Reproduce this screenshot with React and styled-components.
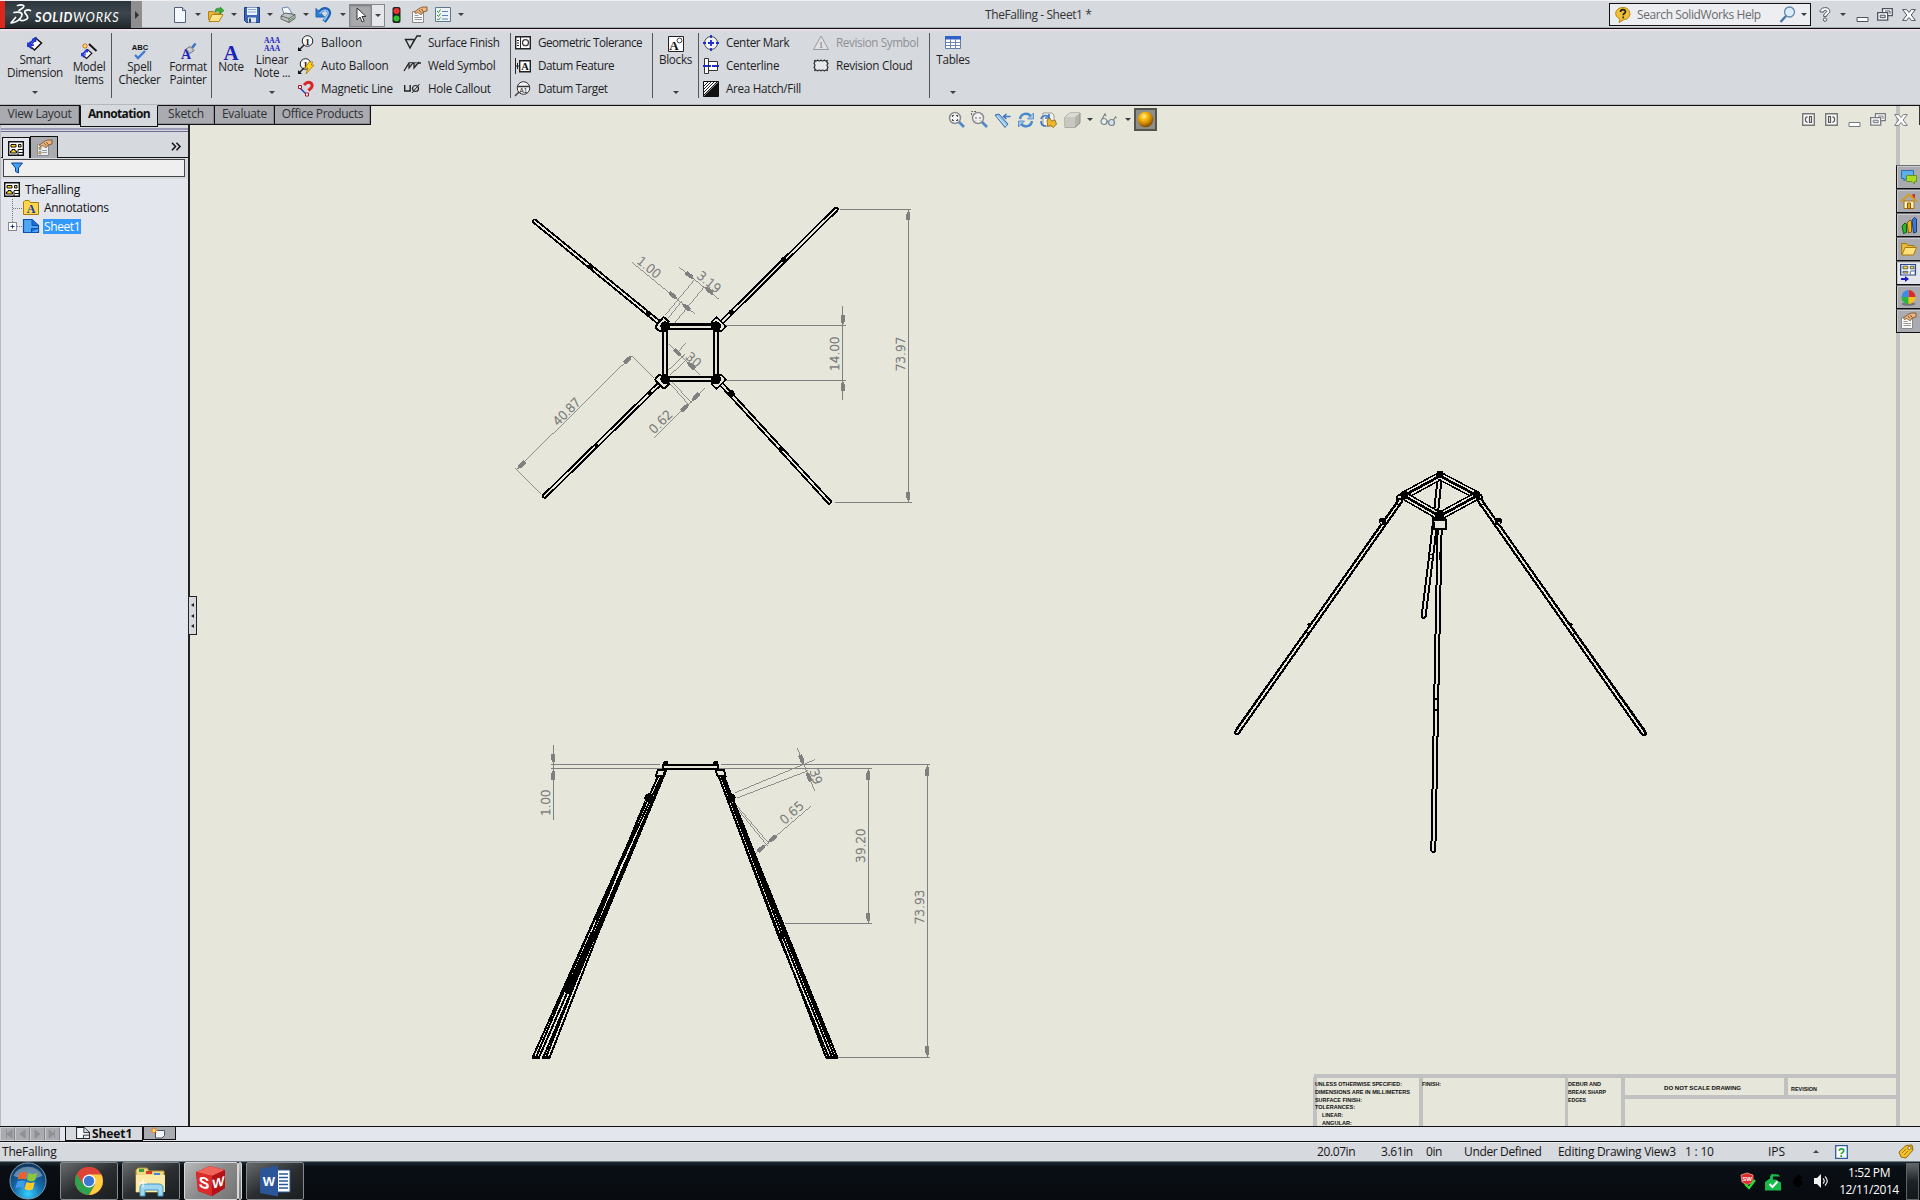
import React from 'react';
import styled, { createGlobalStyle } from 'styled-components';

const BAR = '#d6d9de';
const PAPER = '#e6e6da';
const UI = '"Open Sans", "Noto Sans", sans-serif';

const Global = createGlobalStyle`
  body { margin: 0; background: ${BAR}; overflow: hidden; }
  * { box-sizing: border-box; }
  svg { display: block; flex: none; overflow: visible; }
`;

const Shell = styled.div`
  width: 1920px; height: 1200px; display: flex; flex-direction: column;
  font-family: ${UI}; font-size: 12px; line-height: 13px; color: #1e1e1e; cursor: default;
`;
const Text = styled.span`
  white-space: pre; letter-spacing: ${p => p.$ls || 0}px; font-weight: ${p => p.$bold ? 700 : 400};
  color: ${p => p.$color || 'inherit'}; font-size: ${p => p.$size || 12}px;
`;

/* ---------- title bar ---------- */
const TitleBar = styled.header`
  height: 29px; flex: none; display: flex; align-items: stretch; background: ${BAR};
  border-top: 1px solid #efeff1; border-bottom: 1px solid #111; box-shadow: inset 0 -1px #a9abb0;
  > * { flex: none; }
`;
const Brand = styled.div`
  width: 131px; display: flex; align-items: center; border-left: 5px solid #da291c;
  background: linear-gradient(#2b353b, #3c474d 45%, #20282c); color: #fff;
`;
const BrandName = styled.div`
  font: italic 700 12.5px Lato, sans-serif; letter-spacing: .75px; margin-left: -2px; padding-top: 6px;
  span { font-weight: 400; }
`;
const BrandMore = styled.div`
  width: 11px; background: #8e8e8e; display: flex; align-items: center; justify-content: center; margin-right: 25px;
`;
const Right = styled.i`border: 4px solid transparent; border-left-color: #333; border-right: 0;`;
const Cell = styled.div`
  width: ${p => p.$w}px; flex: none; display: flex; align-items: center; justify-content: ${p => p.$start ? 'flex-start' : 'center'};
  padding-left: ${p => p.$pl || 0}px;
`;
const Caret = styled.i`
  display: block; width: 0; height: 0; border: 3px solid transparent; border-top: 3px solid #3a3d42; border-bottom: 0;
  ${p => p.$up && 'border-top: 0; border-bottom: 3px solid #444;'}
`;
const Pick = styled.div`
  width: 36px; height: 23px; margin: 3px 0 0 0; display: flex; border: 1px solid #85878b; background: #e4e6ea;
  > :first-child { width: 22px; background: #a7a9ad; box-shadow: inset 0 1px 2px #77797d; border-right: 1px solid #85878b; }
`;
const DocTitle = styled.div`display: flex; align-items: center; margin-left: 517px; width: 624px; color: #333;`;
const Search = styled.div`
  width: 202px; height: 23px; margin: 2px 7px 0 0; border: 1px solid #111; background: #eceef2; display: flex; align-items: center;
  padding-left: 5px; color: #6a6a6a;
`;

/* ---------- ribbon ---------- */
const Ribbon = styled.div`
  height: 77px; flex: none; display: flex; background: ${BAR};
  border-top: 2px solid #eadfe8; border-bottom: 1px solid #111; box-shadow: inset 0 -1px #b5b7bb;
`;
const Sep = styled.div`width: 1px; height: 65px; margin: 2px 0 0 ${p => p.$l || 0}px; background: #55575b; flex: none;`;
const Big = styled.div`
  width: ${p => p.$w}px; flex: none; display: flex; flex-direction: column; align-items: center; padding-top: ${p => p.$low ? 12 : 5}px; text-align: center;
`;
const BigLabel = styled.div`display: flex; flex-direction: column; align-items: center; margin-top: ${p => p.$top || 0}px;`;
const DropAt = styled.div`margin-top: ${p => p.$top}px;`;
const Col = styled.div`width: ${p => p.$w}px; margin-left: ${p => p.$l || 0}px; flex: none; display: grid; grid-template-rows: repeat(3, 23px);`;
const Cmd = styled.div`display: flex; align-items: center; color: ${p => p.$off ? '#8e9094' : 'inherit'};`;
const CmdIcon = styled.div`width: ${p => p.$w || 23}px; flex: none;`;

/* ---------- command tabs ---------- */
const Work = styled.div`position: relative; height: 1020px; flex: none; display: flex;`;
const Tabs = styled.nav`position: absolute; left: 0; top: -1px; display: flex; align-items: flex-start; z-index: 2;`;
const Tab = styled.div`
  width: ${p => p.$w}px; height: ${p => p.$on ? 22 : 20}px; display: flex; align-items: center; justify-content: center;
  background: ${p => p.$on ? BAR : '#a9abb0'}; border: 1px solid #111; border-left: ${p => p.$on ? '1px solid #111' : '0'};
  border-top-color: ${p => p.$on ? BAR : '#111'}; color: ${p => p.$on ? '#111' : '#2f3033'};
  padding-bottom: ${p => p.$on ? 5 : 3}px; box-shadow: ${p => p.$on ? 'none' : 'inset -1px -1px #8b8d92'};
`;

/* ---------- feature panel ---------- */
const Panel = styled.aside`
  width: 190px; flex: none; background: #e3e6ec; border-right: 2px solid #222; border-left: 1px solid #b9bbc0; display: flex; flex-direction: column;
`;
const PanelTop = styled.div`height: 52px; padding-top: 22px; background: ${BAR}; border-bottom: 1px solid #111;`;
const Stripe = styled.div`height: 4px; border-top: 2px solid #9c9ab6; border-bottom: 1px solid #6b6a90;`;
const PanelTabs = styled.div`display: flex; align-items: flex-end; height: 26px; padding: 0 6px 0 1px;`;
const PanelTab = styled.div`
  width: 28px; height: 22px; border: 1px solid #111; border-bottom: 0; background: ${p => p.$on ? '#e3e6ec' : '#a9abb0'};
  display: flex; align-items: center; justify-content: center; margin-bottom: ${p => p.$on ? -1 : 0}px;
`;
const More = styled.div`margin-left: auto; align-self: center; padding-top: 3px; margin-right: 1px;`;
const FilterWrap = styled.div`background: ${BAR}; padding: 1px 3px 2px 2px; height: 21px;`;
const Filter = styled.div`height: 18px; border: 1px solid #444; background: #efefef; display: flex; align-items: center; padding-left: 7px;`;
const Tree = styled.div`padding-top: 2px; display: flex; flex-direction: column; color: #111;`;
const Node = styled.div`height: 18px; display: flex; align-items: center; padding-left: ${p => p.$l}px; gap: ${p => p.$gap ?? 5}px; span { padding-bottom: 1px; }`;
const Sel = styled.div`background: #3399ff; color: #fff; padding: 1px 1px 0; height: 15px; display: flex; align-items: center;`;
const Handle = styled.div`
  position: absolute; left: 188px; top: 490px; width: 9px; height: 39px; border: 1px solid #222; background: #d6d9de; z-index: 3;
  display: flex; flex-direction: column; justify-content: space-evenly; align-items: center;
`;
const Left = styled.i`border: 2.5px solid transparent; border-right: 3px solid #222; border-left: 0;`;

/* ---------- canvas ---------- */
const Canvas = styled.main`position: relative; width: 1730px; height: 1020px; background: ${PAPER}; overflow: hidden;`;
const HeadsUp = styled.div`position: absolute; left: 755px; top: 2px; height: 23px; display: flex; align-items: center;`;
const Scene = styled.div`width: 23px; height: 23px; background: #8f8f8a; border: 2px solid #55554f; display: flex; align-items: center; justify-content: center;`;
const DocControls = styled.div`position: absolute; left: 1607px; top: 2px; height: 23px; display: flex; align-items: center;`;
const TaskTabs = styled.div`position: absolute; right: 0; top: 59px; width: 24px; display: flex; flex-direction: column;`;
const TaskTab = styled.div`
  height: 24px; border: 1px solid #111; border-right: 0; border-top-color: #6d6f73; background: ${p => p.$on ? '#e3e6ec' : '#a9abb0'}; box-shadow: inset 1px 1px #c9cbcf;
  display: flex; align-items: center; justify-content: center;
`;

/* ---------- bottom ---------- */
const SheetBar = styled.div`height: 16px; flex: none; display: flex; background: #e3e6ec; border-top: 1px solid #111; border-bottom: 1px solid #111;`;
const Nav = styled.div`
  width: 15px; height: 14px; border: 1px solid #c9cbcf; border-right-color: #84868a; background: #a9abb0; display: flex; align-items: center; justify-content: center;
`;
const SheetTab = styled.div`
  width: ${p => p.$w}px; height: ${p => p.$on ? 14 : 13}px; display: flex; align-items: center; gap: 2px; padding-left: ${p => p.$on ? 10 : 6}px; color: #111;
  background: ${p => p.$on ? BAR : '#a9abb0'}; border: 1px solid #111; border-top: 0; margin-left: ${p => p.$l || 0}px; line-height: 11px; padding-bottom: 1px;
`;
const Status = styled.footer`height: 19px; flex: none; display: flex; align-items: center; background: ${BAR}; color: #161616; padding: 0 0 1px 2px; border-top: 1px solid #ecedf0;`;
const Stat = styled.div`width: ${p => p.$w}px; flex: none; display: flex; align-items: center;`;
const TaskBar = styled.div`
  height: 39px; flex: none; display: flex; background: linear-gradient(#1b2a33, #0a0f15 12%, #070b10); border-top: 1px solid #6f7c85; color: #fff;
`;
const Orb = styled.div`width: 60px; display: flex; justify-content: center; padding-right: 5px;`;
const TaskBtn = styled.div`
  width: ${p => p.$w || 58}px; height: 38px; margin-right: ${p => p.$gap ?? 4}px; border: 1px solid ${p => p.$on ? '#d8d8d8' : '#85898c'}; border-radius: 2px;
  background: ${p => p.$on ? 'linear-gradient(135deg,#b9b9b9,#8a8a8a 50%,#757575)' : 'linear-gradient(150deg,#686a6c,#2c2f31 50%,#1a1d1f)'};
  display: flex; align-items: center; justify-content: center;
`;
const Tray = styled.div`margin-left: auto; display: flex; align-items: center;`;
const Clock = styled.div`width: 74px; text-align: center; line-height: 17px; display: flex; flex-direction: column;`;
const Desk = styled.div`width: 13px; height: 37px; border: 1px solid #5d6468; background: linear-gradient(#60666a, #1c2225 50%, #14181b); margin-right: 1px;`;

/* ---------- icons ---------- */
const Ico = ({ w = 16, h = 16, vb, children }) => (
  <svg width={w} height={h} viewBox={vb || `0 0 ${w} ${h}`} fill="none" stroke="none">{children}</svg>
);
const DS = () => (
  <Ico w={22} h={21} vb="0 0 22 21"><g stroke="#fff" strokeWidth="1.700" strokeLinecap="round" strokeLinejoin="round">
    <path d="M7.500 1.500c5-1.200 8-.3 5.500 2.200L9 6.500" />
    <path d="M4 8.500c7-1.500 10 1 6.500 5.500C8 17 5 18.800 1 19l4.500-5.500" />
    <path d="M20.500 6.500c-3.500-1.500-7.500.5-5 3.200s3.500 5-.5 6.300-4 .4-5 0" /></g></Ico>
);
const NewI = () => <Ico><path d="M2.500 .5h8l3 3v12h-11z" fill="#f2f8fd" stroke="#51627a" /><path d="M10.500 .5v3h3" fill="#cfe0f0" stroke="#51627a" /></Ico>;
const OpenI = () => <Ico><path d="M.5 13V4.500h5l1 1.500h6v2" fill="#e9b93a" stroke="#b1821b" /><path d="M1 14.500l3-7h11l-4 7z" fill="#ffe58a" stroke="#b1821b" /><path d="M7 5c0-4 3-4.500 5-3V0l4 3.500-4 3.500V5c-2-1.500-3-1-5 0z" fill="#35b035" stroke="#1e7a1e" strokeWidth=".6" /></Ico>;
const SaveI = () => <Ico><path d="M.5 .5h15v15h-13l-2-2z" fill="#3a66b5" stroke="#1b3c80" /><path d="M3 .5h10v7.500H3z" fill="#eef3fa" /><path d="M4 2.500h8M4 5h8" stroke="#8aa6cc" /><path d="M4 10.500h8v5H4z" fill="#dfe6ee" /><path d="M5 11.500h2v4H5z" fill="#24427c" /></Ico>;
const PrintI = () => <Ico><path d="M4 7L2 1l6-1 4 6.500z" fill="#f4f8fb" stroke="#6c8cb0" /><path d="M1 9l4-3 10 1.500v4l-6 4-8-3.500z" fill="#c0c3c6" stroke="#666" /><path d="M1 9l8 2.500 6-4M9 11.500v4" stroke="#666" /><path d="M10 13l4-2.500" stroke="#3a3" /></Ico>;
const UndoI = () => <Ico><path d="M3 6C8-.5 14 2 13 7c-.5 3-3 5-5 7.500" stroke="#1e5fb4" strokeWidth="4" /><path d="M0 1.500V10h8.500z" fill="#2d7fd6" stroke="#1e5fb4" /><path d="M3.500 6.500C8 1 13 3 12 7c-.5 2-2 4-4 6.500" stroke="#8cc8fa" strokeWidth="1.500" /></Ico>;
const CursorI = () => <Ico w={12} h={17}><path d="M2 1v12l3-3 2.200 5 2-1L7 9.500h4z" fill="#fff" stroke="#333" /></Ico>;
const LightI = () => <Ico w={9} h={16}><rect x=".5" y="0" width="8" height="16" rx="2" fill="#222" /><circle cx="4.500" cy="4" r="3" fill="#e33" /><circle cx="4.500" cy="11.500" r="3" fill="#2fc42f" /></Ico>;
const HandI = ({ tint = '#fafafa', blocks }) => <Ico w={17}><path d="M1.500 4.500h11v11h-11z" fill={tint} stroke="#8a8a8a" /><path d="M6 10.500h5M6 12.500h5" stroke="#999" />{blocks ? <path d="M3 7h2v2.500H3zM3 11.500h2V14H3z" fill="#f0b41e" stroke="#666" strokeWidth=".5" /> : <path d="M3.500 8.500h4M3.500 10.500h3M3.500 12.500h3" stroke="#999" />}<path d="M3.500 5L8 1.500l3.500-1.500h4.500v4l-4 1-1.500 2.500-2-.5L7 5.500l-2.500 1z" fill="#e9b684" stroke="#7a4a1c" strokeWidth=".8" /><path d="M8 3l2 2.500M10.500 2l1.500 2.500" stroke="#7a4a1c" strokeWidth=".9" /></Ico>;
const ListI = () => <Ico><path d="M.5 .5h15v14H.5z" fill="#eef2f7" stroke="#5f7690" /><path d="M7 4.500h6M7 8.500h6M7 12h6" stroke="#5c84b4" /><path d="M2 4l1.500 1.500L5.500 2.500M2 8l1.500 1.500L5.500 6.500M2 12l1.500 1L5.500 10.500" stroke="#2a9a2a" /></Ico>;
const Bubble = () => <Ico><path d="M8 .5c9 0 9 12 1 12L4 15.500l1-3.500C-2 9 0 .5 8 .5z" fill="#f3c136" stroke="#b58518" /><path d="M5.500 5c0-3 5-3 5-.3 0 1.600-2.300 1.600-2.300 3.600M8.200 9.500v1.700" stroke="#222" strokeWidth="1.700" /></Ico>;
const Lens = () => <Ico w={17} h={17}><circle cx="10.500" cy="6" r="5" fill="#dcecfa" stroke="#5f88ad" strokeWidth="1.300" /><path d="M7 10L1.500 16" stroke="#4a78a6" strokeWidth="2.400" /></Ico>;
const QMark = () => <Ico w={12} h={15}><path d="M1 4.800C1-.6 11-.8 10.800 4.400c-.1 2.400-3 2.500-3.300 5H4.600c0-4 3.200-3.500 3.200-5 0-1.500-3.400-1.500-3.400.8z" fill="#fff" stroke="#4d5360" /><circle cx="6" cy="12.600" r="1.700" fill="#fff" stroke="#4d5360" /></Ico>;
const MinI = ({ c = '#4d5360' }) => <Ico w={13} h={14}><path d="M1 9.500h11v4H1z" fill="#fff" stroke={c} /></Ico>;
const RestI = ({ c = '#4d5360' }) => <Ico w={16} h={13}><path d="M5.500 .7h9.800v7H5.500z" fill="#fff" stroke={c} strokeWidth="1.300" /><path d="M8 3h5v3" stroke={c} /><path d="M.7 4.700h10v7.500h-10z" fill="#fff" stroke={c} strokeWidth="1.300" /><path d="M3.200 7.200h5v2.500h-5z" fill={BAR} stroke={c} /></Ico>;
const XI = ({ c = '#4d5360' }) => <Ico w={14} h={12}><path d="M.6.600h4L7 3.500 9.400.6h4L9.200 6l4.200 5.400h-4L7 8.500l-2.400 2.900h-4L4.800 6z" fill="#fff" stroke={c} /></Ico>;

const Dim = () => <g><path d="M2 8l6-6 6 5-7 7z" fill="#fff" /><path d="M8 1.500L14.500 7 7.500 14 4 11" stroke="#111" strokeWidth="1.500" /><path d="M2 8.500L8 2M1 6.500v4.500M.5 9l4.500 3.500" stroke="#1c2ed0" strokeWidth="1.800" /><path d="M5 3.500l4-1.500L8.500 6M3 5.500V9.800l4-.8M4 9l5-6" stroke="#1c2ed0" strokeWidth="1.300" /></g>;
const SmartI = () => <Ico><Dim /></Ico>;
const ModelI = () => <Ico h={17}><g transform="translate(0 5) scale(.75)"><Dim /></g><path d="M8 1l7.500 7" stroke="#111" strokeWidth="1.800" /><path d="M4 0v6M1 3h6M2 1l4 4M6 1L2 5" stroke="#e66a1c" /><circle cx="4" cy="3" r="1.300" fill="#ffd94a" /></Ico>;
const Glyph = ({ x, y, s, f = '#111', b = 700, a = 'middle', serif, children }) => <text x={x} y={y} fontSize={s} fontWeight={b} fill={f} textAnchor={a} fontFamily={serif ? 'Liberation Serif, serif' : 'Liberation Sans, sans-serif'}>{children}</text>;
const SpellI = () => <Ico w={18} h={17}><Glyph x={9} y={6.5} s={7.600}>ABC</Glyph><path d="M4 12l3 3 7-7" stroke="#3f7ad6" strokeWidth="2.400" /></Ico>;
const FormatI = () => <Ico h={17}><Glyph x={6} y={16} s={14} f="#1a22b8" serif>A</Glyph><path d="M6 6l4-2.500 4 4-4.500 3z" fill="#c9ced6" stroke="#555" strokeWidth=".8" /><path d="M12 5l3.500-4.500" stroke="#3b74c4" strokeWidth="2.500" /></Ico>;
const NoteI = () => <Ico h={17}><Glyph x={8} y={16.500} s={21} f="#1a22b8" serif>A</Glyph></Ico>;
const LinearI = () => <Ico><Glyph x={8} y={7} s={7.500} f="#1a22b8" serif>AAA</Glyph><Glyph x={8} y={15} s={7.500} f="#1a22b8" serif>AAA</Glyph></Ico>;
const Balloon = ({ cx = 9.500 }) => <><circle cx={cx} cy="6" r="5.300" fill="#f6f6f6" stroke="#222" /><Glyph x={cx} y={9.500} s={9} serif>1</Glyph><path d="M6 10L1.500 14.500" stroke="#222" strokeWidth="1.500" /><path d="M0 16v-4l4 4z" fill="#111" /></>;
const BalloonI = () => <Ico><Balloon /></Ico>;
const AutoI = () => <Ico><Balloon cx={7.500} /><path d="M11 4l4 0-2 3h3l-8 9 2-6H7z" fill="#ffd21e" stroke="#a87800" strokeWidth=".8" /></Ico>;
const MagnetI = () => <Ico><path d="M6 4c5-5.500 10-1 7.500 2.500L9.500 10.500" stroke="#d8242b" strokeWidth="3" /><path d="M8 12l2.500-2.500" stroke="#ddd" strokeWidth="3" /><path d="M1 6l8 8" stroke="#1c2ed0" strokeWidth="1.300" /><path d="M.5 4.500h3v3h-3zM7.500 12h3v3h-3z" fill="#fff" stroke="#b01020" /></Ico>;
const SurfI = () => <Ico w={17}><path d="M1.500 4.500h9L6 13zM6 13L13 1h4" stroke="#222" strokeWidth="1.400" /></Ico>;
const WeldI = () => <Ico w={17} h={14}><path d="M0 12l5-8h12" stroke="#222" strokeWidth="1.300" /><path d="M5 4v5l4-5M10 4v5l5-6" stroke="#222" strokeWidth="1.200" fill="#aaa" /></Ico>;
const HoleI = () => <Ico w={17} h={12}><path d="M.7 2v6h5.500V2" stroke="#222" strokeWidth="1.400" /><circle cx="11.500" cy="5.500" r="3" stroke="#222" strokeWidth="1.200" /><path d="M8 10L15.500 1" stroke="#222" /></Ico>;
const GeoI = () => <Ico h={14}><path d="M.7.700h14.600v12H.7z" fill="#fff" stroke="#222" strokeWidth="1.400" /><path d="M5.500 1v12M2 4.500h2M2 7h2M2 9.500h2" stroke="#222" /><circle cx="10.500" cy="6.700" r="3" stroke="#444" strokeWidth="1.300" /></Ico>;
const DatI = () => <Ico><path d="M.5 0v16M1 8h4M2.500 5v6" stroke="#222" /><path d="M4.700 2.700h10.600v11H4.700z" fill="#fff" stroke="#222" strokeWidth="1.400" /><Glyph x={10} y={12} s={10.500} serif>A</Glyph></Ico>;
const TgtI = () => <Ico><circle cx="8.500" cy="7" r="6.300" fill="#f4f4f4" stroke="#333" /><path d="M2 5.500h13M4 11l-4 4" stroke="#333" strokeWidth="1.300" /><Glyph x={8.500} y={11.500} s={6.500} b={400}>A1</Glyph></Ico>;
const BlockI = () => <Ico><path d="M.5 .5h15v15H.5z" fill="#fff" stroke="#222" /><Glyph x={6} y={14} s={13} serif>A</Glyph><circle cx="11.500" cy="4.500" r="2.400" stroke="#444" fill="#fff" /></Ico>;
const CenI = () => <Ico><circle cx="8" cy="8" r="6.500" fill="#f2f3f6" stroke="#444" /><path d="M8 0v3M8 13v3M0 8h3M13 8h3M8 5v6M5 8h6" stroke="#1c2ed0" strokeWidth="1.800" /></Ico>;
const ClI = () => <Ico><path d="M1.500 .5h4v15h-4zM5.500 3.500h9v9h-9z" fill="#fff" stroke="#333" /><path d="M0 8h16" stroke="#1c2ed0" strokeWidth="2" strokeDasharray="5 1 2 1" /></Ico>;
const HatchI = () => <Ico><path d="M.5 .5h15v15H.5z" fill="#111" stroke="#111" /><path d="M1 1h14L1 15z" fill="#fff" /><path d="M1 5l4-4M1 8l7-7M1 11l10-10M1 14L14 1" stroke="#222" strokeWidth="1" /></Ico>;
const RevI = () => <Ico><path d="M8 1l7.500 13.500H.5z" fill="#e0e1e3" stroke="#9a9ca0" /><Glyph x={8} y={13} s={9} f="#9a9ca0" serif>1</Glyph></Ico>;
const CloudI = () => <Ico h={13}><path d="M1.500 1.500h13v10h-13z" fill="#e6e8eb" /><path d="M1.500 1q1.500 2 3.200 0q1.600 2 3.300 0q1.700 2 3.300 0q1.700 2 3.200 0q-1.500 1.900.5 3.600q-2 1.900 0 3.600q-1.500 1.900-.5 3.800q-1.500-2-3.200 0q-1.600-2-3.300 0q-1.700-2-3.300 0q-1.700-2-3.200 0q1.500-1.900-.5-3.800q2-1.700 0-3.600q1.500-1.700.5-3.600z" stroke="#222" strokeWidth="1.100" /></Ico>;
const TableI = () => <Ico h={13}><path d="M.5 .5h15v12H.5z" fill="#fff" stroke="#5f7aa8" /><path d="M0 0h16v3.500H0z" fill="#2f5fc8" /><path d="M5.500 3v10M10.500 3v10M1 6.500h15M1 9.500h15" stroke="#6f86ad" /></Ico>;

const DrawI = () => <Ico><path d="M.7.700h14.600v13.600H.7z" fill="#fff" stroke="#111" strokeWidth="1.400" /><path d="M3 3.500h5v2.500H3zM10.500 3.500h2.500v2.500h-2.500zM2.500 12v-2h1.500V8.500h3V10h1.500v2z" fill="#ffd21e" stroke="#111" /><path d="M10 8.500h5.500M10 8.500v6M10.500 11.500h5" stroke="#111" /></Ico>;
const FunnelI = () => <Ico w={12} h={12}><path d="M.5 1h11L7.500 6v5l-3-1.500V6z" fill="#43a4ee" stroke="#0f3f9a" /></Ico>;
const ChevI = () => <Ico w={10} h={9}><path d="M1 .8L4.500 4.500 1 8.200M5.500.8L9 4.500 5.500 8.200" stroke="#111" strokeWidth="1.500" /></Ico>;
const AnnI = () => <Ico><path d="M.5 14.500V2L2 .5h4l1.500 2h8v12z" fill="#ffd84a" stroke="#a97a10" /><Glyph x={8} y={13} s={12} f="#1238b8" serif>A</Glyph></Ico>;
const SheetI = ({ plain }) => <Ico w={plain ? 14 : 16} h={plain ? 12 : 14} vb="0 0 16 14"><path d="M.5 .5H9l6.500 6v7H.5z" fill={plain ? '#f6f9fc' : '#4fa6f5'} stroke={plain ? '#222' : '#0d4fae'} strokeWidth="1.200" /><path d="M9 .5v6h6M8.500 13V9.500h7" fill={plain ? '#cfe0f0' : '#1c6fdc'} stroke={plain ? '#222' : '#0d4fae'} /></Ico>;
const TreeLines = ({ plus }) => <Ico w={plus ? 14 : 11} h={18}>{plus
  ? <><path d="M4.500 0v5M9 9.500h6" stroke="#777" strokeDasharray="1 1" /><rect x=".5" y="5.500" width="8" height="8" fill="#fff" stroke="#888" /><path d="M2.500 9.500h4M4.500 7.500v4" stroke="#1b3c80" /></>
  : <path d="M.5 0v18M1 9.500h10" stroke="#777" strokeDasharray="1 1" />}</Ico>;

const ZoomI = ({ area }) => <Ico w={17} h={17}><circle cx="7" cy="7" r="5.500" fill="#f2f2f2" stroke="#8d8d8d" strokeWidth="1.500" />{area ? <path d="M.5 4V.5H5M5 6v3.500M9 6v3.500" stroke="#666" strokeDasharray="2 1" /> : <path d="M4.500 6V4.500H6M8 4.500h1.500V6M9.500 8v1.500H8M6 9.500H4.500V8" stroke="#555" strokeWidth="1.100" />}<path d="M11 11l5 5" stroke="#4f87c9" strokeWidth="2.600" /></Ico>;
const PrevI = () => <Ico w={17} h={16}><path d="M1 3l4-1 9 10-3 3.500z" fill="#8cc0ea" stroke="#3d6fa8" /><path d="M3 4l9 10" stroke="#e8f4ff" /><path d="M16.500 4.500h-6M12.500 2l-3 2.500 3 2.500" stroke="#3f77c4" strokeWidth="1.500" /></Ico>;
const RefreshI = () => <Ico><path d="M2 7C3 1 10 0 13 4.500M14 9c-1 6-8 7-11 2.500" stroke="#4788cf" strokeWidth="2.400" /><path d="M15.500 1v6h-6zM.5 15V9h6z" fill="#9cc8f2" stroke="#3d78bd" strokeWidth=".7" /></Ico>;
const ThreeDI = () => <Ico w={17}><path d="M3 1h9l2 2v11H3z" fill="#f5f5f5" stroke="#999" /><path d="M1 7c1-4 6-4 8-2M9 2v4H5M1 9c0 3 2 5 5 5" stroke="#3f77c4" strokeWidth="1.700" /><path d="M7 8l3-2 1.500 3L15 8l1.500 4-3 3.500-3-2-3 1z" fill="#eeb52e" stroke="#8d6510" strokeWidth=".8" /></Ico>;
const CubeI = () => <Ico w={17}><path d="M1 5l5-4h10v10l-5 4.500H1z" fill="#b5b5ae" stroke="#8f8f88" /><path d="M1 5h10v10.500H1z" fill="#c8c8c1" /><path d="M1 5l5-4h10l-5 4z" fill="#dcdcd6" /></Ico>;
const GlassI = () => <Ico w={17} h={13}><circle cx="4" cy="8.500" r="3" fill="#e4eff6" stroke="#7a8288" strokeWidth="1.200" /><circle cx="11.500" cy="9.500" r="3" fill="#cfe4f2" stroke="#7a8288" strokeWidth="1.200" /><path d="M2 6L5 1l1 2M13.500 7l2-3 1 1M7 8l1.500 1" stroke="#7a8288" strokeWidth="1.200" /></Ico>;
const BallI = () => <Ico w={17} h={17}><defs><radialGradient id="gold" cx=".4" cy=".3" r=".75"><stop offset="0" stopColor="#fff6b0" /><stop offset=".25" stopColor="#ffc21a" /><stop offset=".6" stopColor="#d18a06" /><stop offset="1" stopColor="#6a3c00" /></radialGradient></defs><circle cx="8.500" cy="8.500" r="7.800" fill="url(#gold)" /></Ico>;
const PaneI = ({ flip }) => <Ico w={13} h={13}><path d="M.7.700h11.600v11.600H.7z" fill="#fafafa" stroke="#777" strokeWidth="1.400" /><g transform={flip ? 'translate(13 0) scale(-1 1)' : ''}><path d="M7.500 3.500h2v6h-2zM5.500 3.500L3.500 5v3l2 1.500" stroke="#555" strokeWidth="1.200" /></g></Ico>;

const ChatI = () => <Ico><path d="M.5 1.500h12v8H5l-2 2.500v-2.500H.5z" fill="#5fb0ea" stroke="#2a70b4" /><path d="M5.500 6.500h10v6h-2V15L11 12.500H5.500z" fill="#a8dc28" stroke="#66951a" /></Ico>;
const HomeI = () => <Ico><path d="M11.500 1h2.500v5h-2.500z" fill="#c8321e" /><path d="M3 8h10v7.500H3z" fill="#fff3b8" stroke="#a9701a" /><path d="M0 8.500L8 1.500l8 7" stroke="#d99a1a" strokeWidth="2" /><path d="M6.500 10h3v5.500h-3z" fill="#e9a21c" stroke="#8a5a10" /></Ico>;
const LibI = () => <Ico h={17}><path d="M1 9l3-3 1.500 1v8.500l-3 1z" fill="#2fb42f" stroke="#136013" /><path d="M6 6l3-3 1.500 1v11l-3 1z" fill="#f0b41e" stroke="#7a5a10" /><path d="M11 3l2.500-2.500L15.500 2v13l-3 1z" fill="#3f77d4" stroke="#1a3a7a" /></Ico>;
const FoldI = () => <Ico h={14}><path d="M.5 12.500V1.500h5l1.500 2h6v2" fill="#e9b93a" stroke="#a97a10" /><path d="M1 13l3-7.500h11.500l-3 7.500z" fill="#ffe07a" stroke="#a97a10" /></Ico>;
const PalI = () => <Ico w={17} h={18}><g transform="scale(.98 .7)"><path d="M.7.700h15v15H.7z" fill="#fff" stroke="#2b4a86" strokeWidth="1.400" /><path d="M3 3h5v4H3zM10.500 3H14v4h-3.500zM3 10.500h5v2.500H3zM10.500 10v5M11 10h4" fill="#ffd21e" stroke="#2b4a86" /></g><path d="M1 15h5" stroke="#1a1ac8" strokeWidth="2" /><path d="M5 12l4 3-4 3z" fill="#1a1ac8" /></Ico>;
const AppI = () => <Ico w={17} h={17}><ellipse cx="8.500" cy="15" rx="7" ry="1.800" fill="#555" opacity=".6" /><path d="M8.500 8H1.500A7 7 0 0 0 8.500 15z" fill="#28b83c" /><path d="M8.500 8V15A7 7 0 0 0 15.500 8z" fill="#f4c21e" /><path d="M8.500 8h7A7 7 0 0 0 8.500 1z" fill="#e02a2a" /><path d="M8.500 8V1A7 7 0 0 0 1.500 8z" fill="#3f8ce8" /></Ico>;

/* ---------- drawing primitives (3 units per pixel) ---------- */
const Tube = ({ d, w = 16, i = 5 }) => <><path d={d} stroke="#000" strokeWidth={w} strokeLinecap="round" fill="none" /><path d={d} stroke={PAPER} strokeWidth={i} strokeLinecap="round" fill="none" /></>;
const Arrow = ({ x, y, a, n = 32 }) => <path transform={`translate(${x} ${y}) rotate(${a})`} d={`M0 0L${-n + 20}-6H${-n}V6H${-n + 20}z`} fill="#808080" />;
const DimText = ({ x, y, a, len, children }) => (
  <text transform={`translate(${x} ${y}) rotate(${a})`} y="13" textAnchor="middle" textLength={len} lengthAdjust="spacing" fontFamily="'DejaVu Sans Light', 'DejaVu Sans', sans-serif" fontWeight="200" fontSize="37" fill="#757575" stroke="#7a7a7a" strokeWidth="1.300">{children}</text>
);
const Knot = ({ x, y, r = 8 }) => <circle cx={x} cy={y} r={r} fill="#000" />;

const TopView = () => (
  <g transform="translate(500 190) scale(.33333)">
    <g stroke="#808080" strokeWidth="3" fill="none">
      <path d="M1020 58.500H1233M1005 937.500H1236M1225.500 58V937M677 406.500H1038M677 571.500H1038M1028.500 348V629" />
    </g>
    <g stroke="#808080" strokeWidth="2.600" fill="none">
      <path d="M396 217L585 372M538 232L657 328M497 374L586 266M520 404L613 290M505 384L545 334" />
      <path d="M50 838L396 497M396 497L463 564M46 834L124 912M508 463L600 554M500 545L556 492M510 556L566 502M535 486L556 460" />
      <path d="M463 743L615 594M505 575L566 644M515 575L577 640" />
    </g>
    <Arrow x={1225.5} y={59} a={-90} /><Arrow x={1225.500} y={937} a={90} />
    <Arrow x={1028.5} y={406} a={90} /><Arrow x={1028.500} y={572} a={-90} />
    <Arrow x={533} y={328} a={39} /><Arrow x={545} y={340} a={-141} />
    <Arrow x={583} y={268} a={39} /><Arrow x={613} y={290} a={-141} />
    <Arrow x={396} y={497} a={-45} /><Arrow x={52} y={837} a={135} />
    <Arrow x={545} y={500} a={45} /><Arrow x={560} y={514} a={-135} />
    <Arrow x={568} y={640} a={-45} /><Arrow x={574} y={634} a={135} />
    <Tube d="M104 94L480 400" /><Tube d="M1008 58L662 400" /><Tube d="M134 918L480 580" /><Tube d="M988 936L660 578" />
    <Knot x={272} y={231} /><Knot x={445} y={370} /><Knot x={852} y={209} /><Knot x={694} y={367} />
    <Knot x={290} y={766} r={6} /><Knot x={450} y={610} r={6} /><Knot x={843} y={777} /><Knot x={694} y={611} r={10} />
    {[[486, 403, -50], [656, 403, 45], [486, 575, 45], [656, 575, -45]].map(([x, y, a]) => (
      <g key={`${x}-${y}`} transform={`translate(${x} ${y}) rotate(${a})`}><rect x="-20" y="-11" width="40" height="22" rx="4" fill={PAPER} stroke="#000" strokeWidth="6" /></g>
    ))}
    <path d="M495 410H648V567H495z" fill="none" stroke="#000" strokeWidth="19" />
    <path d="M510 410H633M510 567H633M495 425V552M648 425V552" stroke={PAPER} strokeWidth="6" fill="none" />
    <Knot x={496} y={409} r={15} /><Knot x={648} y={409} r={15} /><Knot x={496} y={568} r={15} /><Knot x={648} y={568} r={15} />
    <DimText x={1202} y={492} a={-90} len={104}>73.97</DimText>
    <DimText x={1004} y={491} a={-90} len={104}>14.00</DimText>
    <DimText x={200} y={665} a={-45} len={100}>40.87</DimText>
    <DimText x={482} y={695} a={-45} len={82}>0.62</DimText>
    <DimText x={447} y={232} a={39} len={80}>1.00</DimText>
    <DimText x={627} y={276} a={39} len={80}>3.19</DimText>
    <DimText x={576} y={505} a={42} len={60}>.30</DimText>
  </g>
);
const FrontView = () => (
  <g transform="translate(500 730) scale(.33333)">
    <g stroke="#808080" strokeWidth="3" fill="none">
      <path d="M153 103.500H481M663 103.500H1290M153 115.500H1115M160.500 45V269M1282.500 104V982M1000 982.500H1290M1105.500 116V580M855 580.500H1116" />
    </g>
    <g stroke="#808080" strokeWidth="2.600" fill="none">
      <path d="M892 54L944 183M706 188L945 89M711 204L925 122M758 378L932 229M700 215L808 342M705 228L802 347" />
    </g>
    <Arrow x={160.5} y={103} a={90} /><Arrow x={160.500} y={117} a={-90} />
    <Arrow x={1282.5} y={105} a={-90} /><Arrow x={1282.500} y={981} a={90} />
    <Arrow x={1105.5} y={118} a={-90} /><Arrow x={1105.500} y={580} a={90} />
    <Arrow x={912} y={105} a={68} /><Arrow x={920} y={124} a={-112} />
    <Arrow x={804} y={338} a={140} /><Arrow x={798} y={344} a={-40} />
    <g stroke="#000" strokeWidth="6" fill="none">
      <path d="M474 139L440 215L98 982M484 139L263 614L108 982M489 139L130 982M492 132L282 614L138 982M500 118L293 614L149 982" />
      <path d="M436 215L240 700L118 980" />
      <path d="M430 230L290 575" strokeWidth="8" /><path d="M278 614L200 790" strokeWidth="16" />
      <path d="M648 118L978 982M656 139L834 614L986 982M664 139L846 614L996 982M672 139L860 614L1004 982M670 142L700 215L1012 982" />
      <path d="M700 220L850 600L985 930" strokeWidth="9" />
      <path d="M95 983h24M127 984h22M978 983h20M1000 983h13" strokeWidth="9" />
      <path d="M474 119H497L490 137H468zM646 119H672L676 137H652z" fill={PAPER} />
    </g>
    <path d="M490 104H654V117H490z" fill={PAPER} stroke="#000" strokeWidth="6" />
    <Knot x={497} y={100} /><Knot x={647} y={100} /><Knot x={446} y={203} r={13} /><Knot x={694} y={203} r={13} /><Knot x={278} y={614} r={9} /><Knot x={847} y={614} r={9} />
    <DimText x={137} y={218} a={-90} len={80}>1.00</DimText>
    <DimText x={875} y={248} a={-42} len={82}>0.65</DimText>
    <DimText x={948} y={140} a={72} len={46}>39</DimText>
    <DimText x={1082} y={347} a={-90} len={104}>39.20</DimText>
    <DimText x={1259} y={531} a={-90} len={104}>73.93</DimText>
  </g>
);
const IsoView = () => (
  <g transform="translate(1220 460) scale(.33333)">
    <Tube d="M659 55L638 250L611 468" w={18} i={6} />
    <Tube d="M541 122L51 817" w={18} i={5} /><path d="M534 124L46 812" stroke="#000" strokeWidth="6" fill="none" />
    <Tube d="M780 122L1271 820" w={18} i={5} /><path d="M788 124L1276 814" stroke="#000" strokeWidth="6" fill="none" />
    <Tube d="M659 205L650 650L640 1170" w={18} i={6} />
    <path d="M661 275V300" stroke="#000" strokeWidth="8" /><path d="M642 718H655V750H642z" fill={PAPER} stroke="#000" strokeWidth="5" />
    {['M660 48L555 105', 'M660 48L768 105', 'M555 109L658 168', 'M768 109L660 168'].map(d => (
      <g key={d} fill="none"><path d={d} stroke="#000" strokeWidth="26" /><path d={d} stroke={PAPER} strokeWidth="17" /><path d={d} stroke="#000" strokeWidth="8" /></g>
    ))}
    <path d="M640 180H679V206H642z" fill={PAPER} stroke="#000" strokeWidth="6" /><path d="M638 178H679" stroke="#000" strokeWidth="9" />
    <path d="M552 98l-20 10-2 24 14 4M770 98l14 8 8 26-14 4" stroke="#000" strokeWidth="5" fill="none" />
    <Knot x={660} y={43} r={11} /><Knot x={553} y={105} r={12} /><Knot x={770} y={104} r={12} /><Knot x={659} y={165} r={14} />
    <Knot x={488} y={184} r={11} /><Knot x={835} y={184} r={11} />
    <circle cx="484" cy="188" r="3" fill={PAPER} /><circle cx="838" cy="188" r="3" fill={PAPER} />
    <Knot x={268} y={494} r={6} /><Knot x={1052} y={494} r={6} />
    <path d="M258 516l12 8M1052 526l12-6M630 284h8M628 296h8" stroke="#000" strokeWidth="4" />
  </g>
);
const Fine = ({ x, y, len, a, children }) => <text x={x} y={y} textLength={len} textAnchor={a} lengthAdjust="spacingAndGlyphs" fontFamily="Liberation Sans, sans-serif" fontWeight="700" fontSize="6.200" fill="#111">{children}</text>;
const TitleBlock = () => (
  <g>
    <g fill="#c1c1c1">
      <rect x="1896" y="106" width="4" height="1020" />
      <rect x="1314" y="1074" width="582" height="4" /><rect x="1313" y="1077" width="4" height="49" />
      <rect x="1419" y="1078" width="3.500" height="48" /><rect x="1564.500" y="1078" width="3.500" height="48" /><rect x="1621" y="1078" width="4" height="48" />
      <rect x="1784" y="1078" width="3.500" height="18" /><rect x="1621" y="1095" width="275" height="3.500" />
    </g>
    <path d="M1919.500 106V125" stroke="#333" />
    <Fine x={1315} y={1086} len={87}>UNLESS OTHERWISE SPECIFIED:</Fine>
    <Fine x={1315} y={1094} len={95}>DIMENSIONS ARE IN MILLIMETERS</Fine>
    <Fine x={1315} y={1101.5} len={47}>SURFACE FINISH:</Fine>
    <Fine x={1315} y={1109} len={40}>TOLERANCES:</Fine>
    <Fine x={1322} y={1117} len={21}>LINEAR:</Fine>
    <Fine x={1322} y={1125} len={30}>ANGULAR:</Fine>
    <Fine x={1422} y={1086} len={19}>FINISH:</Fine>
    <Fine x={1568} y={1086} len={33}>DEBUR AND</Fine>
    <Fine x={1568} y={1093.5} len={38}>BREAK SHARP</Fine>
    <Fine x={1568} y={1101.500} len={18}>EDGES</Fine>
    <Fine x={1664} y={1090} len={77}>DO NOT SCALE DRAWING</Fine>
    <Fine x={1791} y={1091} len={26}>REVISION</Fine>
  </g>
);

/* ---------- taskbar icons ---------- */
const StartI = () => <Ico w={40} h={38} vb="0 0 40 39"><defs><radialGradient id="orb" cx=".5" cy=".85" r=".9"><stop offset="0" stopColor="#35d0ff" /><stop offset=".45" stopColor="#1668a8" /><stop offset="1" stopColor="#0b2c50" /></radialGradient></defs>
  <circle cx="20" cy="19.500" r="18.500" fill="url(#orb)" stroke="#7fa0b8" /><path d="M5 14a16 14 0 0 1 30 0c-8 4-22 4-30 0z" fill="#fff" opacity=".35" />
  <path d="M11 12c3-2 6-2 8-1l-1.500 7c-3-1-5-1-8 0z" fill="#f0602a" /><path d="M20.500 11.500c3 1 5 1.500 9-.5l-2 7.500c-3 2-5 1.500-8.500 0z" fill="#8cc63a" /><path d="M9 20c3-1.500 6-1.500 8 0l-1.500 7c-3-1.500-5-1.500-8.500 0z" fill="#3f9be8" /><path d="M18.500 20.500c3 1.500 5 1.500 8.500 0l-2 7.500c-3 1.500-5 1.500-8.500-.5z" fill="#ffc824" /></Ico>;
const ChromeI = () => <Ico w={28} h={28}><circle cx="14" cy="14" r="14" fill="#dd4437" /><path d="M14 14L1.900 7A14 14 0 0 0 14 28l6-10.500z" fill="#2fa14f" /><path d="M14 14l6 3.500L14 28A14 14 0 0 0 26.100 7H14z" fill="#ffcd3f" /><path d="M14 7.500h12.400A14 14 0 0 0 1.900 7L8 17z" fill="#dd4437" /><circle cx="14" cy="14" r="6.400" fill="#fff" /><circle cx="14" cy="14" r="5.200" fill="#3a78d6" /></Ico>;
const ExplorerI = () => <Ico w={34} h={31}><path d="M2 26V4l2-2h9l2 3h15v21z" fill="#f2d680" stroke="#b89438" /><path d="M5 3h5v3H5z" fill="#36a43a" /><path d="M12 5h6v3h-6z" fill="#d83c2a" /><path d="M20 7h6v3h-6z" fill="#3f86d8" /><path d="M2 9h29v17H2z" fill="#fbe9a8" /><path d="M6 30v-8c0-4 3-4 5-4h12c3 0 6 0 6 4v8h-5v-6H11v6z" fill="#9fd6f0" stroke="#3f94c0" /><path d="M9 13v8M5 17h8" stroke="#fff" /></Ico>;
const SWI = () => <Ico w={34} h={32}><path d="M2 7L16 1l15 4v18l-13 8L4 26z" fill="#a30f14" /><path d="M2 7L16 1l15 4-13 6z" fill="#f0625a" /><path d="M18 11l13-6v18l-13 8z" fill="#b51218" /><path d="M2 7l16 4v20L4 26z" fill="#dd2a2a" /><g transform="translate(10 17) skewY(12)"><Glyph x={0} y={6.5} s={16} f="#fff">S</Glyph></g><g transform="translate(24.500 16) skewY(-18)"><Glyph x={0} y={6} s={13} f="#fff">W</Glyph></g></Ico>;
const WordI = () => <Ico w={31} h={32}><path d="M17 5h13v22H17z" fill="#fff" stroke="#2a5699" /><path d="M19 9h9M19 12.500h9M19 16h9M19 19.500h9M19 23h9" stroke="#2a5699" strokeWidth="1.500" /><path d="M0 4l18-3.500v31L0 28z" fill="#2a5699" /><Glyph x={9} y={21} s={13} f="#fff">W</Glyph></Ico>;
const Tray1 = () => <Ico w={16} h={18}><path d="M1 3l6-2 6 2v7l-6 3-5-3z" fill="#e02a2a" stroke="#f4a09a" strokeWidth=".8" /><Glyph x={7} y={9} s={6} f="#fff">SW</Glyph><path d="M5 12l4 4 6-8" stroke="#2fe02f" strokeWidth="2.200" /></Ico>;
const Tray2 = () => <Ico w={16} h={17}><path d="M0 9l4-3 1-.5V3.500L6.500 1l7 .5 1.500 2-7 0v3h3l5 3v8H0z" fill="#18b84a" /><path d="M4.500 11l3 3 5-5.500" stroke="#fff" strokeWidth="2" /></Ico>;
const Tray3 = () => <Ico w={12}><path d="M3 5l4-3 3 2-2 3 3 3-4 4-4-1-2-4z" fill="#000" stroke="#000" strokeDasharray="2 1" /></Ico>;
const SpeakI = () => <Ico w={15} h={14}><path d="M0 4h3l4-4v14L3 10H0z" fill="#f2f2f2" /><path d="M9 4.500c1.500 1.500 1.500 3.500 0 5M11 2.500c3 3 3 6 0 9" stroke="#e8e8e8" strokeWidth="1.200" /></Ico>;
const TagI = () => <Ico w={16} h={15}><path d="M1 8l7-6.500 6-.5 1 5-7 8-5-1z" fill="#f5bf2a" stroke="#93690c" /><circle cx="11.500" cy="4" r="1.600" fill="#fff" stroke="#93690c" /><path d="M4 9l4-4M6 11l4-4" stroke="#a87b12" /></Ico>;
const HelpI = () => <Ico w={13} h={14}><path d="M.7.700h11.600v12.600H.7z" fill="#fff" stroke="#2c5c9a" strokeWidth="1.300" /><Glyph x={6.5} y={11.500} s={12} f="#12a030">?</Glyph></Ico>;
const NewSheetI = () => <Ico w={15} h={12}><path d="M5.500 3.500h9v5l-2.500 2.500H5.500z" fill="#f2f6fa" stroke="#456" /><path d="M4 0v7M.5 3.500h7M1.500 1l5 5M6.500 1l-5 5" stroke="#f07a1c" /><circle cx="4" cy="3.500" r="1.500" fill="#ffe24a" /></Ico>;

const L = ({ t, ls, size, bold }) => <Text $ls={ls} $size={size} $bold={bold}>{t}</Text>;
const Row = ({ icon, t, ls = -0.3, iw, off }) => <Cmd $off={off}><CmdIcon $w={iw}>{icon}</CmdIcon><L t={t} ls={ls} size={11.7} /></Cmd>;
const BigCmd = ({ w, icon, lines, low, drop, gap }) => (
  <Big $w={w} $low={low}>{icon}<BigLabel $top={gap ?? (low ? 0 : 1)}>{lines.map(t => <L key={t} t={t} ls={-0.3} size={11.7} />)}</BigLabel>{drop && <DropAt $top={drop}><Caret /></DropAt>}</Big>
);

export default function App() {
  return (
    <Shell>
      <Global />
      <TitleBar>
        <Brand><Cell $w={32}><DS /></Cell><BrandName>SOLID<span>WORKS</span></BrandName></Brand>
        <BrandMore><Right /></BrandMore>
        <Cell $w={25}><NewI /></Cell><Cell $w={12}><Caret /></Cell>
        <Cell $w={24}><OpenI /></Cell><Cell $w={12}><Caret /></Cell>
        <Cell $w={24}><SaveI /></Cell><Cell $w={12}><Caret /></Cell>
        <Cell $w={24}><PrintI /></Cell><Cell $w={12}><Caret /></Cell>
        <Cell $w={24}><UndoI /></Cell><Cell $w={13}><Caret /></Cell>
        <Pick><Cell $w={22}><CursorI /></Cell><Cell $w={12}><Caret /></Cell></Pick>
        <Cell $w={22}><LightI /></Cell><Cell $w={25}><HandI /></Cell><Cell $w={21}><ListI /></Cell><Cell $w={15}><Caret /></Cell>
        <DocTitle><L t="TheFalling - Sheet1 *" ls={-0.4} /></DocTitle>
        <Search><Bubble /><Cell $w={148} $start $pl={6}><L t="Search SolidWorks Help" ls={-0.4} /></Cell><Lens /><Cell $w={16}><Caret /></Cell></Search>
        <Cell $w={14}><QMark /></Cell><Cell $w={22}><Caret /></Cell><Cell $w={16}><MinI /></Cell><Cell $w={30}><RestI /></Cell><Cell $w={17}><XI /></Cell>
      </TitleBar>

      <Ribbon>
        <BigCmd w={70} icon={<SmartI />} lines={['Smart', 'Dimension']} drop={12} />
        <BigCmd w={38} icon={<ModelI />} lines={['Model', 'Items']} low />
        <Sep $l={3} />
        <BigCmd w={55} icon={<SpellI />} lines={['Spell', 'Checker']} low />
        <BigCmd w={42} icon={<FormatI />} lines={['Format', 'Painter']} low />
        <Sep $l={2} />
        <BigCmd w={38} icon={<NoteI />} lines={['Note']} low />
        <BigCmd w={44} icon={<LinearI />} lines={['Linear', 'Note ...']} drop={12} />
        <Col $w={106} $l={4}><Row icon={<BalloonI />} t="Balloon" ls={0} /><Row icon={<AutoI />} t="Auto Balloon" ls={-0.2} /><Row icon={<MagnetI />} t="Magnetic Line" /></Col>
        <Col $w={106}><Row iw={24} icon={<SurfI />} t="Surface Finish" /><Row iw={24} icon={<WeldI />} t="Weld Symbol" /><Row iw={24} icon={<HoleI />} t="Hole Callout" /></Col>
        <Sep />
        <Col $w={137} $l={4}><Row icon={<GeoI />} t="Geometric Tolerance" ls={-0.5} /><Row icon={<DatI />} t="Datum Feature" ls={-0.45} /><Row icon={<TgtI />} t="Datum Target" ls={-0.45} /></Col>
        <Sep />
        <BigCmd w={45} icon={<BlockI />} lines={['Blocks']} drop={25} />
        <Sep />
        <Col $w={110} $l={4}><Row icon={<CenI />} t="Center Mark" ls={-0.4} /><Row icon={<ClI />} t="Centerline" /><Row icon={<HatchI />} t="Area Hatch/Fill" /></Col>
        <Col $w={116}><Row off icon={<RevI />} t="Revision Symbol" ls={-0.4} /><Row icon={<CloudI />} t="Revision Cloud" ls={-0.25} /></Col>
        <Sep />
        <BigCmd w={46} icon={<TableI />} lines={['Tables']} gap={4} drop={25} />
      </Ribbon>

      <Work>
        <Tabs>
          <Tab $w={80}><L t="View Layout" ls={-0.3} /></Tab>
          <Tab $w={78} $on><L t="Annotation" bold ls={-0.6} /></Tab>
          <Tab $w={57}><L t="Sketch" ls={-0.2} /></Tab>
          <Tab $w={60}><L t="Evaluate" ls={-0.3} /></Tab>
          <Tab $w={96}><L t="Office Products" ls={-0.3} /></Tab>
        </Tabs>
        <Panel>
          <PanelTop>
            <Stripe />
            <PanelTabs><PanelTab $on><DrawI /></PanelTab><PanelTab><HandI tint="#e8eef5" blocks /></PanelTab><More><ChevI /></More></PanelTabs>
          </PanelTop>
          <FilterWrap><Filter><FunnelI /></Filter></FilterWrap>
          <Tree>
            <Node $l={3}><DrawI /><L t="TheFalling" ls={-0.15} /></Node>
            <Node $l={11} $gap={0}><TreeLines /><AnnI /><Cell $w={5} /><L t="Annotations" ls={-0.3} /></Node>
            <Node $l={7} $gap={0}><TreeLines plus /><Cell $w={1} /><SheetI /><Cell $w={4} /><Sel><L t="Sheet1" ls={-0.4} /></Sel></Node>
          </Tree>
        </Panel>
        <Canvas>
          <svg width="1730" height="1020" viewBox="190 106 1730 1020" shapeRendering="crispEdges">
            <TitleBlock /><TopView /><FrontView /><IsoView />
          </svg>
          <HeadsUp>
            <Cell $w={23}><ZoomI /></Cell><Cell $w={23}><ZoomI area /></Cell><Cell $w={23}><PrevI /></Cell><Cell $w={23}><RefreshI /></Cell><Cell $w={23}><ThreeDI /></Cell><Cell $w={24}><CubeI /></Cell><Cell $w={12}><Caret /></Cell><Cell $w={25}><GlassI /></Cell><Cell $w={13}><Caret /></Cell><Scene><BallI /></Scene>
          </HeadsUp>
          <DocControls>
            <Cell $w={23}><PaneI /></Cell><Cell $w={23}><PaneI flip /></Cell><Cell $w={23}><MinI c="#777a80" /></Cell><Cell $w={23}><RestI c="#777a80" /></Cell><Cell $w={23}><XI c="#777a80" /></Cell>
          </DocControls>
          <TaskTabs>
            <TaskTab><ChatI /></TaskTab><TaskTab><HomeI /></TaskTab><TaskTab><LibI /></TaskTab><TaskTab><FoldI /></TaskTab><TaskTab $on><PalI /></TaskTab><TaskTab><AppI /></TaskTab><TaskTab><HandI /></TaskTab>
          </TaskTabs>
        </Canvas>
        <Handle><Left /><Left /><Left /></Handle>
      </Work>

      <SheetBar>
        {['M4.500 1v8M10 1L5 5l5 4z', 'M8 1L3 5l5 4z', 'M3 1l5 4-5 4z', 'M7.500 1v8M2 1l5 4-5 4z'].map(d => <Nav key={d}><Ico w={11} h={10}><path d={d} fill="#8e9094" stroke="#8e9094" /></Ico></Nav>)}
        <SheetTab $w={78} $on $l={5}><SheetI plain /><L t="Sheet1" bold ls={-0.1} /></SheetTab>
        <SheetTab $w={33}><NewSheetI /></SheetTab>
      </SheetBar>
      <Status>
        <Stat $w={1315}><L t="TheFalling" ls={-0.2} /></Stat>
        <Stat $w={64}><L t="20.07in" ls={-0.4} /></Stat><Stat $w={45}><L t="3.61in" ls={-0.4} /></Stat><Stat $w={38}><L t="0in" ls={-0.4} /></Stat>
        <Stat $w={94}><L t="Under Defined" ls={-0.35} /></Stat><Stat $w={127}><L t="Editing Drawing View3" ls={-0.3} /></Stat><Stat $w={83}><L t="1 : 10" ls={-0.2} /></Stat>
        <Stat $w={45}><L t="IPS" /></Stat><Stat $w={22}><Caret $up /></Stat><Stat $w={63}><HelpI /></Stat><TagI />
      </Status>
      <TaskBar>
        <Orb><StartI /></Orb>
        <TaskBtn><ChromeI /></TaskBtn><TaskBtn><ExplorerI /></TaskBtn>
        <TaskBtn $w={54} $gap={0} $on><SWI /></TaskBtn><TaskBtn $w={4} $gap={4} $on />
        <TaskBtn><WordI /></TaskBtn>
        <Tray>
          <Cell $w={24}><Tray1 /></Cell><Cell $w={25}><Tray2 /></Cell><Cell $w={25}><Tray3 /></Cell><Cell $w={22}><SpeakI /></Cell>
          <Clock><L t="1:52 PM" ls={-0.4} /><L t="12/11/2014" ls={-0.4} /></Clock><Desk />
        </Tray>
      </TaskBar>
    </Shell>
  );
}
